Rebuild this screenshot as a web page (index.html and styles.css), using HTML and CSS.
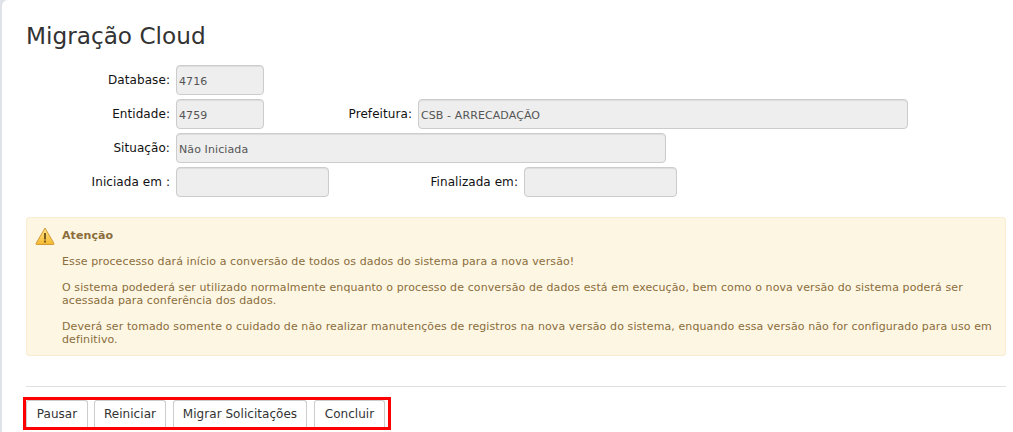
FILE: index.html
```html
<!DOCTYPE html>
<html lang="pt-BR">
<head>
  <meta charset="UTF-8">
  <title>Migração Cloud</title>
  <link rel="stylesheet" href="styles.css">
</head>
<body>
  <main class="card">
    <h1>Migração Cloud</h1>
    <form class="fields">
      <div class="row">
        <label class="label-first">Database:</label>
        <input class="field w-small" type="text" value="4716" disabled>
      </div>
      <div class="row">
        <label class="label-first">Entidade:</label>
        <input class="field w-small" type="text" value="4759" disabled>
        <label class="label-pref">Prefeitura:</label>
        <input class="field w-large" type="text" value="CSB - ARRECADAÇÃO" disabled>
      </div>
      <div class="row">
        <label class="label-first">Situação:</label>
        <input class="field w-large" type="text" value="Não Iniciada" disabled>
      </div>
      <div class="row">
        <label class="label-first">Iniciada em :</label>
        <input class="field w-date" type="text" disabled>
        <label class="label-final">Finalizada em:</label>
        <input class="field w-date" type="text" disabled>
      </div>
    </form>

    <section class="alert">
      <svg class="alert-icon" width="20" height="18" viewBox="0 0 20 18">
        <defs>
          <linearGradient id="warn" x1="0" y1="0" x2="0" y2="1">
            <stop offset="0" stop-color="#fde58a"/>
            <stop offset="1" stop-color="#f5b92f"/>
          </linearGradient>
        </defs>
        <path d="M10 1 L19 16.5 Q19.2 17.5 18 17.5 L2 17.5 Q.8 17.5 1 16.5 Z" fill="url(#warn)" stroke="#d49a3a" stroke-linejoin="round"/>
        <rect x="9" y="6" width="2" height="6.5" fill="#7a5a1e"/>
        <rect x="9" y="13.5" width="2" height="2" fill="#7a5a1e"/>
      </svg>
      <div class="alert-text">
        <h2>Atenção</h2>
        <p>Esse procecesso dará início a conversão de todos os dados do sistema para a nova versão!</p>
        <p>O sistema podederá ser utilizado normalmente enquanto o processo de conversão de dados está em execução, bem como o nova versão do sistema poderá ser acessada para conferência dos dados.</p>
        <p>Deverá ser tomado somente o cuidado de não realizar manutenções de registros na nova versão do sistema, enquando essa versão não for configurado para uso em definitivo.</p>
      </div>
    </section>

    <hr>

    <div class="actions">
      <button type="button" class="btn-pausar">Pausar</button>
      <button type="button" class="btn-reiniciar">Reiniciar</button>
      <button type="button" class="btn-migrar">Migrar Solicitações</button>
      <button type="button" class="btn-concluir">Concluir</button>
    </div>
  </main>
</body>
</html>
```

FILE: styles.css
```css
html, body { height: 100%; }
body { margin: 0; background: #dfe3e9; font-family: "DejaVu Sans", Verdana, sans-serif; overflow: hidden; }
.card { box-sizing: border-box; height: 432px; margin-left: 2px; padding: 20px 7px 0 24px; background: #fff; border-top-left-radius: 6px; }
h1 { margin: 0; font-size: 23.2px; font-weight: 400; line-height: 32px; color: #333; }

.fields { display: flex; flex-direction: column; gap: 4px; margin-top: 13px; }
.row { display: flex; align-items: center; height: 30px; }
.row label { box-sizing: border-box; text-align: right; padding-right: 6px; font-size: 12px; letter-spacing: .07px; color: #111; }
.label-first { width: 150px; }
.label-pref { width: 154px; }
.label-final { width: 195px; }
.field { box-sizing: border-box; height: 30px; padding: 2px 2px 0; border: 1px solid #ccc; border-radius: 4px; background: #eee; font: 11px "DejaVu Sans", Verdana, sans-serif; letter-spacing: .1px; color: #555; opacity: 1; box-shadow: inset 0 1px 1px rgba(0,0,0,.075); }
.w-small { width: 88px; }
.w-date { width: 153px; }
.w-large { width: 490px; }

.alert { display: flex; gap: 7px; box-sizing: border-box; width: 980px; height: 139px; margin-top: 20px; padding: 11px 8px 0 8px; background: #fdf6e3; border: 1px solid #f8edd0; border-radius: 3px; color: #8a6d3b; font-size: 11px; line-height: 13px; letter-spacing: .1px; }
.alert-icon { flex: none; margin-top: -2px; }
.alert-text { flex: 1; }
.alert h2 { margin: 0 0 12px; font-size: 11px; line-height: 14px; font-weight: 700; }
.alert p { margin: 0 0 13px; }

hr { width: 980px; height: 1px; margin: 30px 0 0; border: 0; background: #e0e0e0; }

.actions { display: inline-flex; align-items: flex-start; box-sizing: border-box; height: 33px; margin: 10px 0 0 -3px; padding-right: 3px; border: 3px solid #f00; }
button { box-sizing: border-box; height: 27px; padding: 0; border: 1px solid #ccc; border-bottom: 0; border-radius: 3px 3px 0 0; background: #fff; font: 12px "DejaVu Sans", Verdana, sans-serif; letter-spacing: .04px; color: #333; }
.btn-pausar { width: 62px; }
.btn-reiniciar { width: 72px; margin-left: 6px; }
.btn-migrar { width: 134px; margin-left: 7px; }
.btn-concluir { width: 71px; margin-left: 7px; }
```
